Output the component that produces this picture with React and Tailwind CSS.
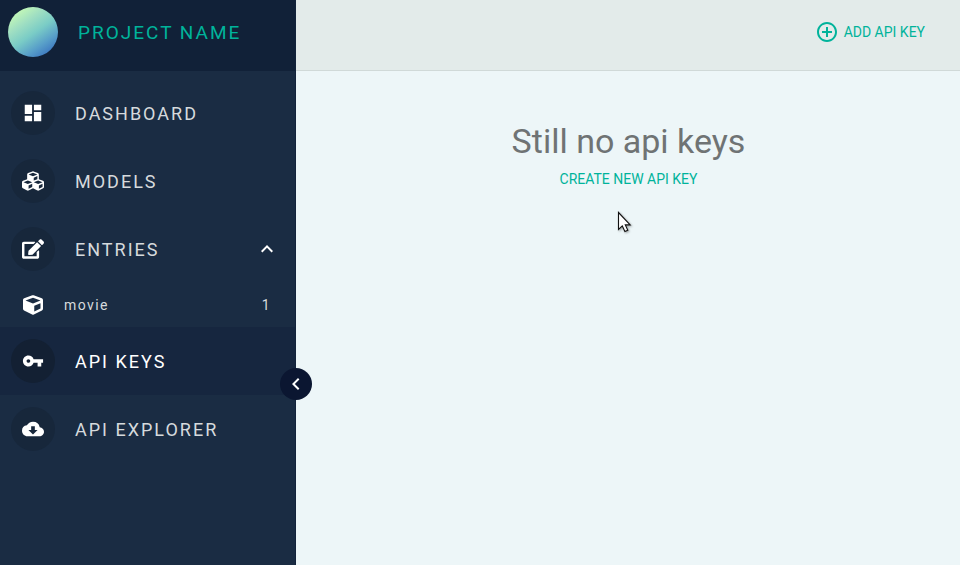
import React from "react";
import { MdDashboard, MdVpnKey, MdCloudDownload, MdControlPoint, MdKeyboardArrowUp, MdKeyboardArrowLeft } from "react-icons/md";
import { FaCubes, FaEdit, FaCube } from "react-icons/fa";

function NavItem({ icon, label, active, children }) {
  return (
    <a className={`flex h-[68px] items-center pl-[11px] pr-4 ${active ? "bg-[#16263f] text-white" : "text-[#d6dadd]"}`}>
      <span className={`flex size-11 shrink-0 items-center justify-center rounded-full text-white ${active ? "bg-[#132033]" : "bg-[#17273b]"}`}>
        {icon}
      </span>
      <span className="ml-5 flex-1 pt-0.5 text-[18px] leading-6 tracking-[2px]">{label}</span>
      {children}
    </a>
  );
}

function Sidebar() {
  return (
    <aside className="relative flex w-[296px] shrink-0 flex-col border-r border-[#13233b] bg-[#1a2c43]">
      <div className="flex h-[71px] items-center bg-[#112138] pb-[7px] pl-2">
        <span className="size-[50px] rounded-full bg-[linear-gradient(145deg,#bff5b8_15%,#a0dfc2_32%,#7accc6_52%,#589fc9_72%,#3a74c0_90%)]" />
        <span className="ml-5 pt-0.5 text-[19px] leading-6 tracking-[2px] text-[#00b39b]">PROJECT NAME</span>
      </div>
      <nav className="flex flex-col pt-2">
        <NavItem icon={<MdDashboard size={22} />} label="DASHBOARD" />
        <NavItem icon={<FaCubes size={22} />} label="MODELS" />
        <NavItem icon={<FaEdit size={22} />} label="ENTRIES">
          <MdKeyboardArrowUp size={24} className="text-white" />
        </NavItem>
        <a className="flex h-11 items-center pl-[23px] pr-6 text-[14px] leading-5 tracking-[1.4px] text-[#d6dadd]">
          <FaCube size={20} className="text-white" />
          <span className="ml-[21px] flex-1">movie</span>
          <span>1</span>
        </a>
        <NavItem icon={<MdVpnKey size={22} />} label="API KEYS" active />
        <NavItem icon={<MdCloudDownload size={22} />} label="API EXPLORER" />
      </nav>
      <button className="absolute -right-[17px] top-[368px] flex size-8 items-center justify-center rounded-full bg-[#0b1631] text-white">
        <MdKeyboardArrowLeft size={24} />
      </button>
    </aside>
  );
}

export default function App() {
  return (
    <div className="relative flex h-[565px] w-[960px] overflow-hidden bg-[#edf6f8] font-['Roboto',sans-serif]">
      <Sidebar />
      <main className="flex flex-1 flex-col">
        <header className="flex h-[71px] items-center justify-end border-b border-[#d0d9d8] bg-[#e3ebea] pb-[7px] pr-[35px] text-[#00b39b]">
          <MdControlPoint size={24} />
          <span className="ml-[5px] text-[14px] leading-5">ADD API KEY</span>
        </header>
        <section className="flex flex-col items-center pl-px pt-[50px]">
          <h1 className="text-[34px] leading-10 text-[#6f7374]">Still no api keys</h1>
          <a className="mt-2 text-[14px] leading-5 text-[#00b39b]">CREATE NEW API KEY</a>
        </section>
      </main>
      <svg className="absolute left-[617px] top-[211px] drop-shadow-[1px_1px_1px_rgba(0,0,0,0.35)]" width="16" height="23" viewBox="0 0 16 23">
        <path d="M1.5 1.5v17l3.8-3.6 2.6 5.6 2.9-1.3-2.5-5.3h4.9z" fill="#fff" stroke="#111" strokeWidth="1.1" />
      </svg>
    </div>
  );
}
